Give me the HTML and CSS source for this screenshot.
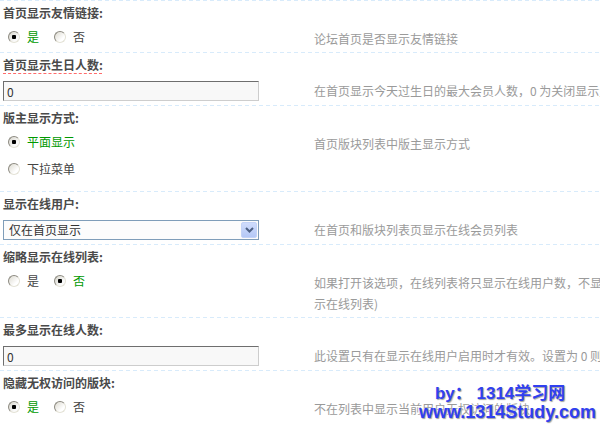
FILE: index.html
```html
<!DOCTYPE html>
<html lang="zh-CN">

<head>
    <meta charset="UTF-8" />
    <meta name="viewport" content="width=device-width, initial-scale=1.0" />
    <!-- internal css -->
    <link rel="stylesheet" href="styles.css">
    <title>首页设置</title>
</head>

<body>

    <div class="settings">
        <!-- 友情链接 -->
        <div class="row">
            <div class="label">首页显示友情链接:</div>
            <div class="line">
                <div class="field">
                    <ul class="radios">
                        <li class="on"><input type="radio" name="link" checked> 是</li>
                        <li><input type="radio" name="link"> 否</li>
                    </ul>
                </div>
                <div class="tips">论坛首页是否显示友情链接</div>
            </div>
        </div>

        <!-- 生日 -->
        <div class="row">
            <div class="label"><span class="mark">首页显示生日人数:</span></div>
            <div class="line">
                <div class="field field-input">
                    <input class="txt" type="text" value="0">
                </div>
                <div class="tips">在首页显示今天过生日的最大会员人数，0 为关闭显示生日提示</div>
            </div>
        </div>

        <!-- 版主 -->
        <div class="row">
            <div class="label">版主显示方式:</div>
            <div class="line">
                <div class="field">
                    <ul class="radios stack">
                        <li class="on"><input type="radio" name="mod" checked> 平面显示</li>
                        <li><input type="radio" name="mod"> 下拉菜单</li>
                    </ul>
                </div>
                <div class="tips">首页版块列表中版主显示方式</div>
            </div>
        </div>

        <!-- 在线用户 -->
        <div class="row">
            <div class="label">显示在线用户:</div>
            <div class="line">
                <div class="field field-input">
                    <div class="select">
                        <span class="select-text">仅在首页显示</span>
                        <span class="select-btn">
                            <svg width="9" height="6" viewBox="0 0 9 6">
                                <path d="M1 1 L4.5 4.5 L8 1" fill="none" stroke="#4d6185" stroke-width="2" />
                            </svg>
                        </span>
                    </div>
                </div>
                <div class="tips">在首页和版块列表页显示在线会员列表</div>
            </div>
        </div>

        <!-- 缩略列表 -->
        <div class="row">
            <div class="label">缩略显示在线列表:</div>
            <div class="line">
                <div class="field">
                    <ul class="radios">
                        <li><input type="radio" name="short"> 是</li>
                        <li class="on"><input type="radio" name="short" checked> 否</li>
                    </ul>
                </div>
                <div class="tips">如果打开该选项，在线列表将只显示在线用户数，不显<br>示在线列表)</div>
            </div>
        </div>

        <!-- 最多在线 -->
        <div class="row">
            <div class="label">最多显示在线人数:</div>
            <div class="line">
                <div class="field field-input">
                    <input class="txt" type="text" value="0">
                </div>
                <div class="tips">此设置只有在显示在线用户启用时才有效。设置为 0 则为不限制</div>
            </div>
        </div>

        <!-- 隐藏版块 -->
        <div class="row">
            <div class="label">隐藏无权访问的版块:</div>
            <div class="line">
                <div class="field">
                    <ul class="radios">
                        <li class="on"><input type="radio" name="hide" checked> 是</li>
                        <li><input type="radio" name="hide"> 否</li>
                    </ul>
                </div>
                <div class="tips">不在列表中显示当前用户无权访问的版块</div>
            </div>
        </div>
    </div>

    <!-- watermark in the corner -->
    <div class="watermark">
        <div class="wm-top">by： 1314学习网</div>
        <div>www.1314Study.com</div>
    </div>

</body>

</html>
```

FILE: styles.css
```css
:root {
    /* colours picked from the old admin panel */
    --line-dash: #d8ebfb;
    --label-color: #4a4a4a;
    --tips-color: #9a9a9a;
    --on-color: #009900;
}

* {
    box-sizing: border-box;
}

html,
body {
    overflow: hidden;
}

body {
    margin: 0;
    background-color: #fff;
    font-family: "Noto Sans CJK SC", "Liberation Sans", sans-serif;
    font-size: 12px;
    color: #333;
    width: 600px;
    height: 424px;
    position: relative;
}

.row {
    /* dashed line on top of every setting */
    background: repeating-linear-gradient(to right, var(--line-dash) 0 4px, transparent 4px 7px) 0 0 / 100% 1px no-repeat;
    padding-top: 1px;
}

.label {
    padding: 1px 3px 0;
    line-height: 21px;
    font-weight: bold;
    color: var(--label-color);
}

.mark {
    text-decoration: underline dashed #ff6b6b;
    text-underline-offset: 3px;
}

.line {
    display: flex;
}

.field {
    flex: 0 0 314px;
    padding-left: 3px;
}

.field-input {
    padding-top: 6px;
    padding-bottom: 4px;
}

.tips {
    padding: 5px 0 3px;
    line-height: 21px;
    color: var(--tips-color);
    white-space: nowrap;
}

/* radio lists */
.radios {
    list-style: none;
    margin: 0;
    padding: 0 0 2px;
    display: flex;
}

.radios li {
    height: 27px;
    display: flex;
    align-items: center;
    padding-left: 5px;
    margin-right: 10px;
    color: #444;
}

.radios li.on {
    color: var(--on-color);
}

.radios.stack {
    flex-direction: column;
    padding-bottom: 9px;
}

input[type=radio] {
    appearance: none;
    -webkit-appearance: none;
    width: 12px;
    height: 12px;
    margin: 0 7px 0 0;
    border-radius: 50%;
    border: 1px solid;
    border-color: #8c8a80 #e4e2d6 #e4e2d6 #8c8a80;
    background: linear-gradient(135deg, #dcdad0, #fff 70%);
}

input[type=radio]:checked {
    background: radial-gradient(circle, #000 0 2px, transparent 2.5px), linear-gradient(135deg, #d6d4ca, #fafafa 70%);
}

/* text box */
.txt {
    display: block;
    width: 256px;
    height: 20px;
    margin: 0;
    padding: 0 3px;
    border: 1px solid;
    border-color: #6e6e6e #cdcdcd #cdcdcd #6e6e6e;
    background-color: #f8f8f8;
    font-family: inherit;
    font-size: 12px;
    color: #333;
}

/* fake xp style select */
.select {
    width: 256px;
    height: 20px;
    border: 1px solid #7f9db9;
    background-color: #fcfcfc;
    display: flex;
    align-items: center;
    justify-content: space-between;
}

.select-text {
    padding-left: 5px;
    line-height: 18px;
}

.select-btn {
    width: 16px;
    height: 16px;
    margin-right: 1px;
    border: 1px solid #c3d3f7;
    border-radius: 2px;
    background: linear-gradient(#cfdcfc, #b4c8f6);
    display: flex;
    align-items: center;
    justify-content: center;
}

/* watermark sits over the last row */
.watermark {
    position: absolute;
    right: 4px;
    bottom: 3px;
    font-family: "Liberation Sans", "Noto Sans CJK SC", sans-serif;
    font-size: 18px;
    font-weight: bold;
    line-height: 18px;
    color: #3040f0;
    text-shadow: 1px 1px 1px #a0a0a0, 0 0 2px #fff;
}

.wm-top {
    padding-left: 16px;
    font-size: 17px;
}
```
